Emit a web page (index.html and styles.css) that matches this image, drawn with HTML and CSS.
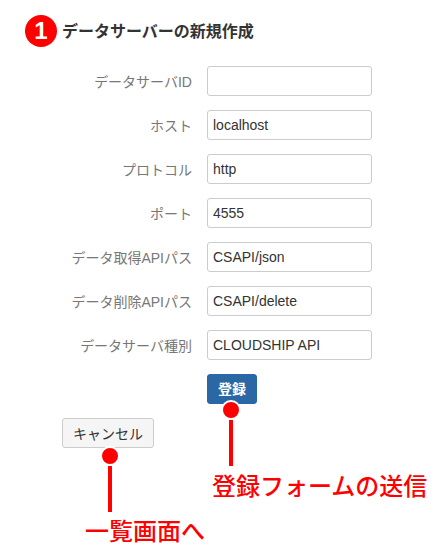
FILE: index.html
```html
<!DOCTYPE html>
<html lang="ja">
<head>
<meta charset="utf-8">
<title>データサーバーの新規作成</title>
<link rel="stylesheet" href="styles.css">
</head>
<body>
<main class="page">
  <h1 class="title"><span class="step">1</span><span class="title-text">データサーバーの新規作成</span></h1>
  <form class="form">
    <div class="row"><label class="label">データサーバID</label><input class="input" type="text" value=""></div>
    <div class="row"><label class="label">ホスト</label><input class="input" type="text" value="localhost"></div>
    <div class="row"><label class="label">プロトコル</label><input class="input" type="text" value="http"></div>
    <div class="row"><label class="label">ポート</label><input class="input" type="text" value="4555"></div>
    <div class="row"><label class="label">データ取得APIパス</label><input class="input" type="text" value="CSAPI/json"></div>
    <div class="row"><label class="label">データ削除APIパス</label><input class="input" type="text" value="CSAPI/delete"></div>
    <div class="row"><label class="label">データサーバ種別</label><input class="input" type="text" value="CLOUDSHIP API"></div>
    <div class="submit-row"><button class="btn btn-primary" type="button">登録</button></div>
    <div class="cancel-row"><button class="btn btn-default" type="button">キャンセル</button></div>
  </form>
</main>
<div class="callout callout-submit"><span class="dot"></span><span class="stem"></span></div>
<div class="callout callout-cancel"><span class="dot"></span><span class="stem"></span></div>
<p class="note note-submit">登録フォームの送信</p>
<p class="note note-cancel">一覧画面へ</p>
</body>
</html>
```
FILE: styles.css
```css
* { box-sizing: border-box; }
html, body { margin: 0; padding: 0; }
body {
  position: relative;
  width: 444px;
  height: 559px;
  overflow: hidden;
  background: #fff;
  color: #333;
  font-family: "Liberation Sans", "Noto Sans CJK JP", sans-serif;
  font-size: 14px;
}
.page { padding: 15px 0 0 25px; }
.title {
  display: flex;
  align-items: center;
  gap: 5px;
  margin: 0;
  height: 32px;
  font-size: 16px;
  font-weight: 700;
  color: #333;
}
.title-text { padding-bottom: 2px; }
.step {
  display: flex;
  align-items: center;
  justify-content: center;
  width: 32px;
  height: 32px;
  border-radius: 50%;
  background: #f00;
  color: #fff;
  font-size: 24px;
  font-weight: 700;
}
.form { display: flex; flex-direction: column; gap: 14px; margin-top: 19px; }
.row { display: flex; align-items: center; gap: 15px; }
.label {
  width: 167px;
  padding-bottom: 1px;
  text-align: right;
  font-weight: 400;
  color: #777;
}
.input {
  width: 165px;
  height: 30px;
  padding: 0 5px;
  border: 1px solid #ccc;
  border-radius: 3px;
  background: #fff;
  color: #333;
  font: inherit;
}
.submit-row { padding-left: 182px; }
.cancel-row { padding-left: 37px; }
.btn {
  height: 30px;
  border-radius: 3px;
  font: inherit;
  cursor: pointer;
}
.btn-primary {
  width: 50px;
  padding: 0 0 3px;
  border: 1px solid #2a67a5;
  background: #2a67a5;
  color: #fff;
  font-weight: 700;
}
.btn-default {
  width: 92px;
  padding: 0 0 1px;
  border: 1px solid #ccc;
  background: #f5f5f5;
  color: #333;
}
.callout {
  position: absolute;
  display: flex;
  flex-direction: column;
  align-items: center;
  width: 20px;
}
.callout-submit { left: 221px; top: 400px; }
.callout-cancel { left: 100px; top: 446px; }
.dot {
  width: 20px;
  height: 20px;
  border: 2px solid #fff;
  border-radius: 50%;
  background: #f00;
}
.stem { width: 4px; height: 46px; background: #f00; }
.note {
  position: absolute;
  margin: 0;
  color: #f00;
  font-size: 24px;
  font-weight: 500;
  line-height: 32px;
  white-space: nowrap;
}
.note-submit { left: 212px; top: 471px; }
.note-cancel { left: 85px; top: 516px; }
```
